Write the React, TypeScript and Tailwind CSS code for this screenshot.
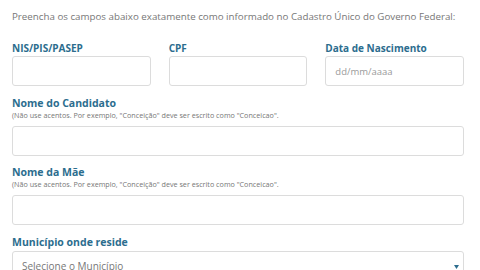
const labelCls = "block text-[10px] leading-[12px] font-bold text-[#2c6d8e]";
const bigLabelCls = "block text-[10.5px] leading-[13px] font-bold text-[#2c6d8e]";
const inputCls =
  "block w-full h-[30px] rounded-[3px] border border-[#dcdcdc] bg-white px-[9px] text-[9.5px] text-[#555] placeholder:text-[#9a9a9a] outline-none";
const hintCls = "text-[7.2px] leading-[9px] text-[#777]";

const topFields = [
  { label: "NIS/PIS/PASEP", placeholder: "" },
  { label: "CPF", placeholder: "" },
  { label: "Data de Nascimento", placeholder: "dd/mm/aaaa" },
];

const Hint = () => (
  <p className={hintCls + " mt-[1px]"}>
    (Não use acentos. Por exemplo, "Conceição" deve ser escrito como "Conceicao".
  </p>
);

export default function App() {
  return (
    <div
      className="w-[480px] h-[270px] overflow-hidden bg-white pl-3 pr-4"
      style={{ fontFamily: '"Open Sans", "Liberation Sans", sans-serif' }}
    >
      <p className="pt-[10px] text-[9.75px] leading-[14px] text-[#777]">
        Preencha os campos abaixo exatamente como informado no Cadastro Único do Governo Federal:
      </p>

      <div className="mt-[18px] grid grid-cols-3 gap-x-[18px]">
        {topFields.map((f) => (
          <div key={f.label}>
            <label className={labelCls}>{f.label}</label>
            <input className={inputCls + " mt-[2px]"} placeholder={f.placeholder} />
          </div>
        ))}
      </div>

      <div className="mt-[11px]">
        <label className={bigLabelCls}>Nome do Candidato</label>
        <Hint />
        <input className={inputCls + " mt-[6px]"} />
      </div>

      <div className="mt-[10px]">
        <label className={bigLabelCls}>Nome da Mãe</label>
        <Hint />
        <input className={inputCls + " mt-[6px]"} />
      </div>

      <div className="mt-[11px]">
        <label className={bigLabelCls}>Município onde reside</label>
        <div className="relative mt-[2px] flex h-[30px] items-center rounded-[3px] border border-[#dcdcdc] bg-white px-[9px]">
          <span className="text-[10px] text-[#777]">Selecione o Município</span>
          <svg
            className="absolute right-[4px] top-[13px]"
            width="5"
            height="4"
            viewBox="0 0 5 4"
          >
            <path d="M0 0 L5 0 L2.5 4 Z" fill="#2c6d8e" />
          </svg>
        </div>
      </div>
    </div>
  );
}
